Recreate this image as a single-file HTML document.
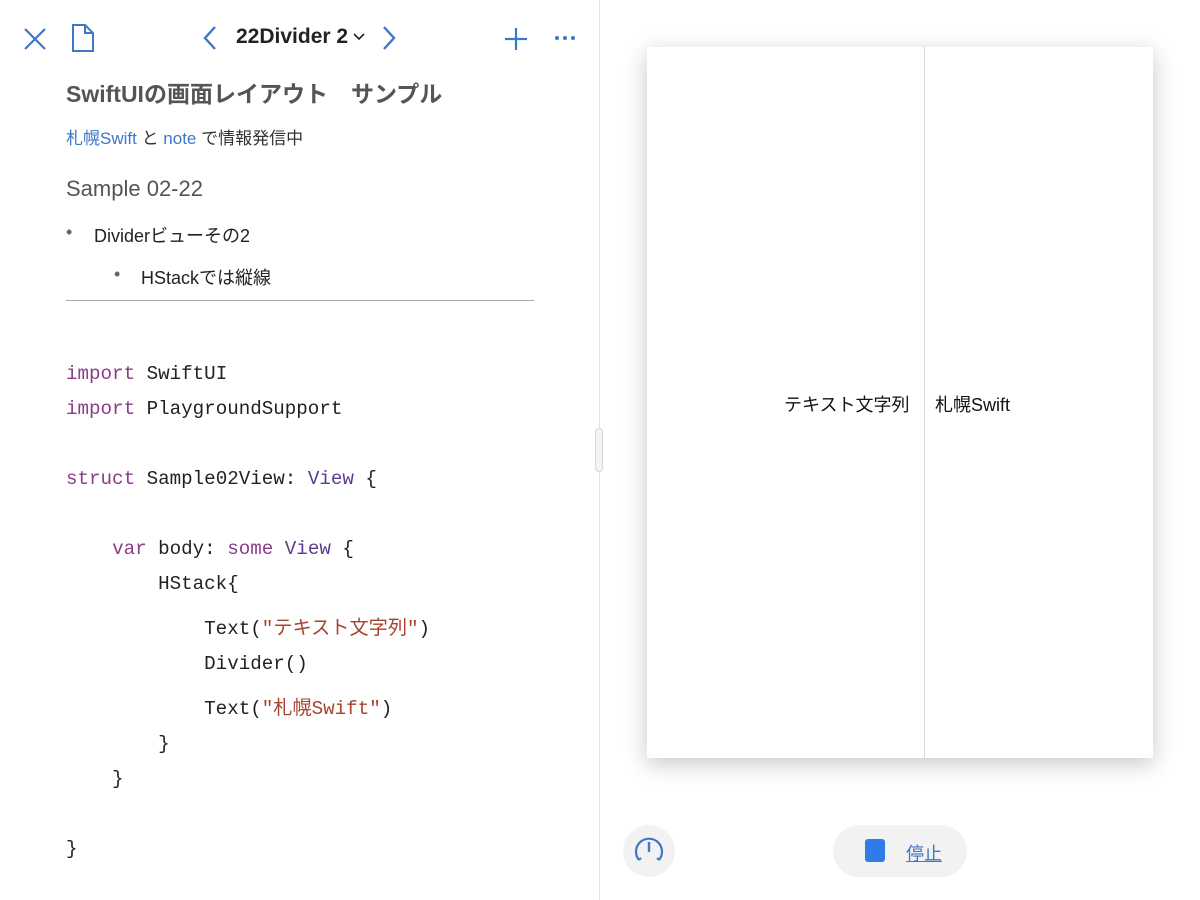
<!DOCTYPE html><html><head><meta charset="utf-8"><style>
body{margin:0;width:1200px;height:900px;background:#fff;position:relative;overflow:hidden;font-family:"Liberation Sans","Noto Sans CJK JP",sans-serif}
.a{position:absolute;white-space:pre}
.c{font-family:"Liberation Mono","Noto Sans CJK JP",monospace;font-size:19.2px;color:#222;line-height:24px}
.k{color:#8a3d87}.t{color:#5b3c8e}.s{color:#a8432f}
</style></head><body>
<svg class="a" style="left:22px;top:26px" width="26" height="26"><path d="M3 3L23 23M23 3L3 23" stroke="#3b78c8" stroke-width="2.2"/></svg>
<svg class="a" style="left:70px;top:23px" width="26" height="30"><path d="M3 2H15L23 10V28H3Z M15 2V10H23" fill="none" stroke="#3b78c8" stroke-width="2"/></svg>
<svg class="a" style="left:202px;top:25px" width="16" height="26"><path d="M13 2L3 13L13 24" fill="none" stroke="#3b78c8" stroke-width="2.4"/></svg>
<div class="a" style="left:236px;top:25px;font-size:21px;font-weight:bold;color:#222">22Divider 2</div>
<svg class="a" style="left:352px;top:32px" width="14" height="10"><path d="M2 2L7 7L12 2" fill="none" stroke="#222" stroke-width="1.6"/></svg>
<svg class="a" style="left:381px;top:25px" width="16" height="26"><path d="M3 2L13 13L3 24" fill="none" stroke="#3b78c8" stroke-width="2.4"/></svg>
<svg class="a" style="left:504px;top:27px" width="24" height="24"><path d="M12 1V23M1 12H23" stroke="#3b78c8" stroke-width="2.2"/></svg>
<svg class="a" style="left:554px;top:34px" width="22" height="8"><circle cx="3" cy="4" r="2" fill="#3b78c8"/><circle cx="11" cy="4" r="2" fill="#3b78c8"/><circle cx="19" cy="4" r="2" fill="#3b78c8"/></svg>
<div class="a" style="left:66px;top:75px;font-size:23px;font-weight:bold;color:#555">SwiftUIの画面レイアウト　サンプル</div>
<div class="a" style="left:66px;top:124px;font-size:17px;color:#333"><span style="color:#3b78c8">札幌Swift</span> と <span style="color:#3b78c8">note</span> で情報発信中</div>
<div class="a" style="left:66px;top:176px;font-size:22px;color:#555">Sample 02-22</div>
<div class="a" style="left:66px;top:222px;font-size:18px;color:#666">•</div>
<div class="a" style="left:94px;top:222px;font-size:18px;color:#222">Dividerビューその2</div>
<div class="a" style="left:114px;top:264px;font-size:18px;color:#666">•</div>
<div class="a" style="left:141px;top:264px;font-size:18px;color:#222">HStackでは縦線</div>
<div class="a" style="left:66px;top:300px;width:468px;height:1px;background:#aaa"></div>
<div class="a c" style="left:66px;top:362px"><span class="k">import</span> SwiftUI</div>
<div class="a c" style="left:66px;top:397px"><span class="k">import</span> PlaygroundSupport</div>
<div class="a c" style="left:66px;top:467px"><span class="k">struct</span> Sample02View: <span class="t">View</span> {</div>
<div class="a c" style="left:66px;top:537px">    <span class="k">var</span> body: <span class="k">some</span> <span class="t">View</span> {</div>
<div class="a c" style="left:66px;top:572px">        HStack{</div>
<div class="a c" style="left:66px;top:617px">            Text(<span class="s">"テキスト文字列"</span>)</div>
<div class="a c" style="left:66px;top:652px">            Divider()</div>
<div class="a c" style="left:66px;top:697px">            Text(<span class="s">"札幌Swift"</span>)</div>
<div class="a c" style="left:66px;top:732px">        }</div>
<div class="a c" style="left:66px;top:767px">    }</div>
<div class="a c" style="left:66px;top:837px">}</div>
<div class="a" style="left:599px;top:0;width:1px;height:900px;background:#e4e4e4"></div>
<div class="a" style="left:595px;top:428px;width:8px;height:44px;border-radius:4px;background:#f4f4f4;border:1px solid #d6d6d6;box-sizing:border-box"></div>
<div class="a" style="left:647px;top:47px;width:506px;height:711px;background:#fff;box-shadow:0 6px 22px rgba(0,0,0,.22)"></div>
<div class="a" style="left:924px;top:47px;width:1px;height:711px;background:#d8d8d8"></div>
<div class="a" style="left:784px;top:391px;font-size:18px;color:#111">テキスト文字列</div>
<div class="a" style="left:935px;top:391px;font-size:18px;color:#111">札幌Swift</div>
<div class="a" style="left:623px;top:825px;width:52px;height:52px;border-radius:50%;background:#f2f2f2"></div>
<svg class="a" style="left:631px;top:833px" width="36" height="36"><path d="M8 27A13 13 0 1 1 28 27" fill="none" stroke="#3b78c8" stroke-width="2.2"/><path d="M18 9V19" stroke="#3b78c8" stroke-width="2.4"/><path d="M8 27L10 25M28 27L26 25" stroke="#3b78c8" stroke-width="2"/></svg>
<div class="a" style="left:833px;top:825px;width:134px;height:52px;border-radius:26px;background:#f2f2f2"></div>
<div class="a" style="left:865px;top:839px;width:20px;height:23px;border-radius:3px;background:#2f7be8"></div>
<div class="a" style="left:906px;top:840px;font-size:18px;color:#3b78c8;text-decoration:underline">停止</div>
</body></html>
